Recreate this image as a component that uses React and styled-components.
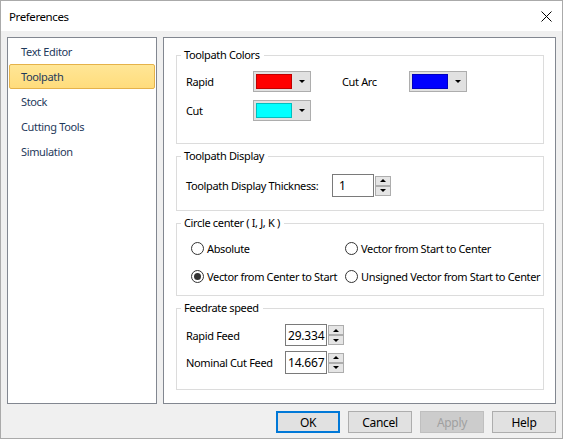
import styled, { createGlobalStyle } from 'styled-components';

const GlobalStyle = createGlobalStyle`
  html, body {
    margin: 0;
    padding: 0;
    background: #ffffff;
  }
  body {
    font-family: "Noto Sans", "Liberation Sans", sans-serif;
    font-size: 11px;
    letter-spacing: -0.35px;
  }
`;

const Window = styled.div`
  width: 563px;
  height: 439px;
  box-sizing: border-box;
  border: 1px solid #aaaaaa;
  background: #f0f0f0;
  display: flex;
  flex-direction: column;
`;

const TitleBar = styled.div`
  height: 30px;
  flex: none;
  background: #ffffff;
  display: flex;
  align-items: center;
  justify-content: space-between;
  padding: 1px 10px 0 8px;
  box-sizing: border-box;
  color: #000;
  font-size: 11.5px;
  letter-spacing: -0.4px;
`;

const CloseIcon = styled.svg`
  width: 11px;
  height: 11px;
`;

const Body = styled.div`
  flex: 1;
  display: flex;
  flex-direction: column;
  padding: 6px 6px 6px 6px;
  gap: 7px;
`;

const Panels = styled.div`
  display: flex;
  gap: 6px;
  height: 367px;
`;

const NavList = styled.ul`
  list-style: none;
  margin: 0;
  padding: 1px 1px;
  width: 150px;
  flex: none;
  box-sizing: border-box;
  background: #fff;
  border: 1px solid #828790;
  display: flex;
  flex-direction: column;
`;

const NavItem = styled.li`
  height: 25px;
  box-sizing: border-box;
  display: flex;
  align-items: center;
  padding-left: 11px;
  color: #1e395b;
  border: 1px solid ${(p) => (p.$active ? '#e5b24a' : 'transparent')};
  border-radius: 2px;
  background: ${(p) => (p.$active ? 'linear-gradient(#ffe696, #ffdc7c)' : 'transparent')};
`;

const Content = styled.div`
  flex: 1;
  min-width: 0;
  box-sizing: border-box;
  background: #fff;
  border: 1px solid #828790;
  padding: 9px 11px 10px 12px;
  display: flex;
  flex-direction: column;
  gap: 4px;
`;

const Group = styled.fieldset`
  margin: 0;
  min-width: 0;
  border: 1px solid #dcdcdc;
  padding: ${(p) => p.$pad || '6px 8px 8px 9px'};
`;

const Legend = styled.legend`
  padding: 0 4px 0 3px;
  margin-left: -5px;
  color: #000;
  line-height: 16px;
`;

const ColorGrid = styled.div`
  display: grid;
  grid-template-columns: 67px 89px 67px 58px;
  row-gap: 8px;
  align-items: center;
`;

const Label = styled.span`
  color: #000;
  white-space: nowrap;
`;

const ColorButton = styled.div`
  width: 58px;
  height: 21px;
  box-sizing: border-box;
  background: #e1e1e1;
  border: 1px solid #adadad;
  display: flex;
  align-items: center;
  padding-left: 2px;
`;

const Swatch = styled.div`
  width: 36px;
  height: 15px;
  box-sizing: border-box;
  background: ${(p) => p.$color};
  border: 1px solid rgba(0, 0, 0, 0.25);
`;

const DropArrow = styled.div`
  margin-left: 7px;
  width: 0;
  height: 0;
  border-left: 3px solid transparent;
  border-right: 3px solid transparent;
  border-top: 3px solid #000;
`;

const FieldRow = styled.div`
  display: flex;
  align-items: center;
  height: ${(p) => p.$h || 23}px;
  margin-top: ${(p) => p.$mt || 0}px;
`;

const FieldLabel = styled(Label)`
  width: ${(p) => p.$w}px;
`;

const Spinner = styled.div`
  display: flex;
  align-items: center;
`;

const NumberBox = styled.div`
  width: ${(p) => p.$w}px;
  height: ${(p) => p.$h || 23}px;
  box-sizing: border-box;
  border: 1px solid #7a7a7a;
  background: #fff;
  display: flex;
  align-items: center;
  padding-left: ${(p) => p.$pl || 6}px;
  color: #000;
  font-size: 12px;
  letter-spacing: -0.2px;
`;

const SpinButtons = styled.div`
  margin-left: 1px;
  display: flex;
  flex-direction: column;
`;

const SpinButton = styled.div`
  width: 16px;
  height: 10px;
  box-sizing: border-box;
  background: #e5e5e5;
  border: 1px solid #adadad;
  display: flex;
  align-items: center;
  justify-content: center;
  &::after {
    content: '';
    border-left: 3px solid transparent;
    border-right: 3px solid transparent;
    ${(p) => (p.$up ? 'border-bottom: 3px solid #000;' : 'border-top: 3px solid #000;')}
  }
`;

const RadioGrid = styled.div`
  display: grid;
  grid-template-columns: 154px auto;
  row-gap: 10px;
  margin-left: 5px;
`;

const RadioOption = styled.label`
  display: flex;
  align-items: center;
  gap: 3px;
  height: 18px;
  color: #000;
  white-space: nowrap;
`;

const RadioCircle = styled.span`
  width: 13px;
  height: 13px;
  box-sizing: border-box;
  border-radius: 50%;
  border: 1px solid #333;
  background: #fff;
  display: flex;
  align-items: center;
  justify-content: center;
  &::after {
    content: '';
    width: 7px;
    height: 7px;
    border-radius: 50%;
    background: ${(p) => (p.$checked ? '#333' : 'transparent')};
  }
`;

const Footer = styled.div`
  display: flex;
  justify-content: flex-end;
  gap: 8px;
  padding-right: 0px;
`;

const Button = styled.button`
  width: 64px;
  height: 22px;
  box-sizing: border-box;
  font-family: inherit;
  font-size: 12px;
  letter-spacing: -0.3px;
  padding: 0;
  background: ${(p) => (p.disabled ? '#cccccc' : '#e1e1e1')};
  color: ${(p) => (p.disabled ? '#a0a0a0' : '#000')};
  border: ${(p) => (p.$default ? '2px solid #0078d7' : p.disabled ? '1px solid #bfbfbf' : '1px solid #adadad')};
`;

const Spin = ({ value, w, h, pl }) => (
  <Spinner>
    <NumberBox $w={w} $h={h} $pl={pl}>{value}</NumberBox>
    <SpinButtons>
      <SpinButton $up />
      <SpinButton />
    </SpinButtons>
  </Spinner>
);

const navItems = ['Text Editor', 'Toolpath', 'Stock', 'Cutting Tools', 'Simulation'];

const App = () => {
  return (
    <>
      <GlobalStyle />
      <Window>
        <TitleBar>
          <span>Preferences</span>
          <CloseIcon viewBox="0 0 11 11">
            <path d="M0.5 0.5 L10.5 10.5 M10.5 0.5 L0.5 10.5" stroke="#000" strokeWidth="1" fill="none" />
          </CloseIcon>
        </TitleBar>
        <Body>
          <Panels>
            <NavList>
              {navItems.map((item) => (
                <NavItem key={item} $active={item === 'Toolpath'}>{item}</NavItem>
              ))}
            </NavList>
            <Content>
              <Group $pad="8px 8px 22px 9px">
                <Legend>Toolpath Colors</Legend>
                <ColorGrid>
                  <Label>Rapid</Label>
                  <ColorButton><Swatch $color="#ff0000" /><DropArrow /></ColorButton>
                  <Label>Cut Arc</Label>
                  <ColorButton><Swatch $color="#0000ff" /><DropArrow /></ColorButton>
                  <Label>Cut</Label>
                  <ColorButton><Swatch $color="#00ffff" /><DropArrow /></ColorButton>
                </ColorGrid>
              </Group>
              <Group $pad="10px 8px 13px 9px">
                <Legend>Toolpath Display</Legend>
                <FieldRow>
                  <FieldLabel $w={146}>Toolpath Display Thickness:</FieldLabel>
                  <Spin value="1" w={42} pl={6} />
                </FieldRow>
              </Group>
              <Group $pad="8px 8px 10px 9px">
                <Legend>Circle center ( I, J, K )</Legend>
                <RadioGrid>
                  <RadioOption><RadioCircle />Absolute</RadioOption>
                  <RadioOption><RadioCircle />Vector from Start to Center</RadioOption>
                  <RadioOption><RadioCircle $checked />Vector from Center to Start</RadioOption>
                  <RadioOption><RadioCircle />Unsigned Vector from Start to Center</RadioOption>
                </RadioGrid>
              </Group>
              <Group $pad="8px 8px 15px 9px">
                <Legend>Feedrate speed</Legend>
                <FieldRow $h={22}>
                  <FieldLabel $w={99}>Rapid Feed</FieldLabel>
                  <Spin value="29.334" w={42} h={22} pl={2} />
                </FieldRow>
                <FieldRow $mt={5}>
                  <FieldLabel $w={99}>Nominal Cut Feed</FieldLabel>
                  <Spin value="14.667" w={42} pl={2} />
                </FieldRow>
              </Group>
            </Content>
          </Panels>
          <Footer>
            <Button $default>OK</Button>
            <Button>Cancel</Button>
            <Button disabled>Apply</Button>
            <Button>Help</Button>
          </Footer>
        </Body>
      </Window>
    </>
  );
};

export default App;
